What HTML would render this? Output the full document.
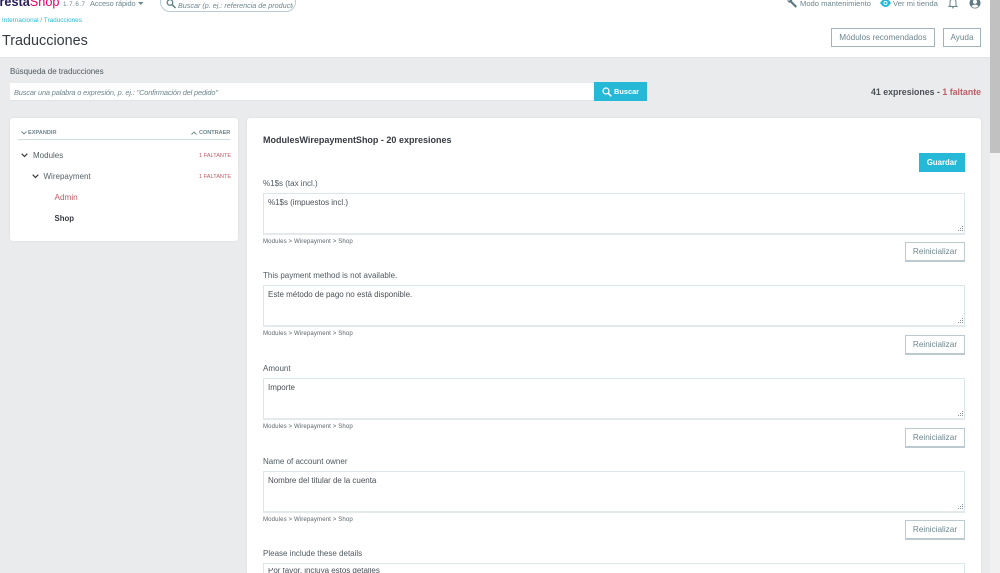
<!DOCTYPE html>
<html lang="es"><head><meta charset="utf-8"><title>Traducciones</title>
<style>
html,body{margin:0;padding:0;width:1000px;height:573px;overflow:hidden;background:#eaebec;font-family:"Liberation Sans",sans-serif;color:#6c868e}
#w{position:relative;width:1000px;height:573px;overflow:hidden;contain:paint}
.a{position:absolute;white-space:nowrap;line-height:1}
.box{position:absolute;box-sizing:border-box}
.ta{position:absolute;left:263px;width:702px;height:42px;box-sizing:border-box;border:1px solid #dbe6e9;border-bottom:2px solid #e4eaec;background:#fff;color:#4a4f56}
.ta span{position:absolute;left:4px;top:4px;font-size:8px;line-height:10px;white-space:nowrap;letter-spacing:-.02px}
.ta svg{position:absolute;right:0;bottom:0}
.lb{position:absolute;left:263px;font-size:8px;line-height:10px;color:#4e5a60;white-space:nowrap}
.pt{position:absolute;left:263px;font-size:6.1px;line-height:8px;color:#5c666b;white-space:nowrap;letter-spacing:.1px}
.rb{position:absolute;left:905px;width:60px;height:20px;box-sizing:border-box;border:1px solid #bccad0;border-bottom:2px solid #bccad0;background:#fff;color:#6c868e;font-size:8.2px;line-height:17px;text-align:center}
</style></head><body><div id="w">

<!-- header -->
<div class="box" style="left:0;top:0;width:990px;height:58px;background:#fff;border-bottom:1px solid #e3e5e6"></div>
<div class="a" style="left:-9px;top:-4px;font-size:12.7px;font-weight:bold;color:#251b5b">Presta<span style="color:#df0067;font-weight:normal">Shop</span></div>
<div class="a" style="left:63px;top:2px;font-size:6.2px;color:#6c868e;letter-spacing:.5px">1.7.6.7</div>
<div class="a" style="left:90px;top:0;font-size:7.4px;color:#6c868e;letter-spacing:-.1px">Acceso rápido</div>
<svg class="box" style="left:138px;top:2px" width="6" height="4"><path d="M0 0h5.500L2.750 3z" fill="#6c868e"/></svg>
<div class="box" style="left:160px;top:-8px;width:136px;height:20px;border:1px solid #bbcdd2;border-radius:10px;background:#fff"></div>
<svg class="box" style="left:166px;top:-1px" width="11" height="10" viewBox="0 0 11 10"><circle cx="4" cy="3.500" r="2.800" fill="none" stroke="#5f7a82" stroke-width="1.200"/><path d="M6 5.500l3.500 3.500" stroke="#5f7a82" stroke-width="1.500"/></svg>
<div class="a" style="left:178px;top:2px;width:115px;overflow:hidden;font-size:7.2px;font-style:italic;color:#6c868e">Buscar (p. ej.: referencia de producto</div>

<svg class="box" style="left:786px;top:-1px" width="12" height="10" viewBox="0 0 12 10"><path d="M1.500 .5a2.600 2.600 0 0 0 3 3.200l5 5 1.600-1.500-5-5A2.800 2.800 0 0 0 2.600-1L4 .8 3 2 1.500 .5z" fill="#5f7a82"/></svg>
<div class="a" style="left:800px;top:0;font-size:7.6px;color:#6c868e">Modo mantenimiento</div>
<svg class="box" style="left:880px;top:-1px" width="11" height="9" viewBox="0 0 11 9"><path d="M0 4C2 1 4 0 5.500 0S9 1 11 4C9 7 7 8 5.500 8S2 7 0 4z" fill="#25b9d7"/><circle cx="5.500" cy="4" r="2" fill="#fff"/><circle cx="5.500" cy="4" r="1.100" fill="#25b9d7"/></svg>
<div class="a" style="left:893px;top:0;font-size:7.7px;color:#6c868e">Ver mi tienda</div>
<svg class="box" style="left:948px;top:-1px" width="10" height="10" viewBox="0 0 10 10"><path d="M2 6.500V3.500C2 1 3.300 0 5 0s3 1 3 3.500v3l1 1H1z" fill="none" stroke="#6c868e" stroke-width="1"/><path d="M4 8.300h2V9.300H4z" fill="#6c868e"/></svg>
<svg class="box" style="left:969px;top:-2px" width="12" height="11" viewBox="0 0 12 11"><circle cx="6" cy="5" r="5.500" fill="#5f7a82"/><circle cx="6" cy="3.800" r="2.100" fill="#fff"/><path d="M2.600 8.300C3.400 6.900 4.600 6.600 6 6.600s2.600.3 3.400 1.700C8.500 9.400 7.300 9.800 6 9.800S3.500 9.400 2.600 8.300z" fill="#fff"/></svg>

<div class="a" style="left:2px;top:17.500px;font-size:6.4px;color:#25b9d7">Internacional / Traducciones</div>
<div class="a" style="left:2px;top:34px;font-size:14.4px;color:#363a41">Traducciones</div>

<div class="box" style="left:831px;top:28px;width:104px;height:19px;border:1px solid #a0b3b9;background:#fff;font-size:8.2px;line-height:17px;text-align:center;color:#6c868e">Módulos recomendados</div>
<div class="box" style="left:943px;top:28px;width:38px;height:19px;border:1px solid #a0b3b9;background:#fff;font-size:8.2px;line-height:17px;text-align:center;color:#6c868e">Ayuda</div>

<!-- search -->
<div class="a" style="left:10px;top:68px;font-size:8px;color:#4e5a60;letter-spacing:-.05px">Búsqueda de traducciones</div>
<div class="box" style="left:10px;top:83px;width:584px;height:18px;background:#fff;border-bottom:1px solid #dfe4e6"></div>
<div class="a" style="left:14px;top:89px;font-size:7.4px;font-style:italic;color:#6c868e;letter-spacing:-.15px">Buscar una palabra o expresión, p. ej.: "Confirmación del pedido"</div>
<div class="box" style="left:594px;top:82px;width:53px;height:19px;background:#25b9d7"></div>
<svg class="box" style="left:602px;top:87px" width="10" height="10" viewBox="0 0 10 10"><circle cx="4" cy="4" r="3" fill="none" stroke="#fff" stroke-width="1.200"/><path d="M6.200 6.200L9.300 9.300" stroke="#fff" stroke-width="1.500"/></svg>
<div class="a" style="left:614px;top:88px;font-size:7.4px;font-weight:bold;color:#fff">Buscar</div>
<div class="a" style="left:871px;top:87.500px;font-size:8.8px;font-weight:bold;color:#4a5157">41 expresiones - <span style="color:#c05c67">1 faltante</span></div>

<!-- left card -->
<div class="box" style="left:10px;top:118px;width:228px;height:123px;background:#fff;border-radius:3px;box-shadow:0 0 2px rgba(0,0,0,.08)"></div>
<div class="box" style="left:18px;top:139px;width:212px;height:1px;background:#cfdde1"></div>
<svg class="box" style="left:21px;top:131px" width="6" height="4"><path d="M.5.5l2.500 2.500 2.500-2.500" fill="none" stroke="#6c868e" stroke-width=".9"/></svg>
<div class="a" style="left:28px;top:131px;font-size:5.6px;font-weight:bold;color:#6c868e">EXPANDIR</div>
<svg class="box" style="left:191px;top:131px" width="6" height="4"><path d="M.5 3.500L3 1l2.500 2.500" fill="none" stroke="#6c868e" stroke-width=".9"/></svg>
<div class="a" style="left:199px;top:131px;font-size:5.6px;font-weight:bold;color:#6c868e;letter-spacing:-.05px">CONTRAER</div>

<svg class="box" style="left:21px;top:153px" width="7" height="5"><path d="M.7.7L3.500 3.500 6.300.7" fill="none" stroke="#363a41" stroke-width="1.200"/></svg>
<div class="a" style="left:33px;top:152px;font-size:8px;color:#555f65">Modules</div>
<div class="a" style="left:199px;top:154px;font-size:5.6px;color:#c05c67">1 FALTANTE</div>
<svg class="box" style="left:32px;top:174px" width="7" height="5"><path d="M.7.7L3.500 3.500 6.300.7" fill="none" stroke="#363a41" stroke-width="1.200"/></svg>
<div class="a" style="left:43.500px;top:173px;font-size:8px;color:#555f65">Wirepayment</div>
<div class="a" style="left:199px;top:175px;font-size:5.6px;color:#c05c67">1 FALTANTE</div>
<div class="a" style="left:54.500px;top:194px;font-size:8.2px;color:#c05c67">Admin</div>
<div class="a" style="left:54.500px;top:214.500px;font-size:7.800px;font-weight:bold;color:#363a41">Shop</div>

<!-- right card -->
<div class="box" style="left:247px;top:118px;width:734px;height:455px;background:#fff;border-radius:3px 3px 0 0;box-shadow:0 0 2px rgba(0,0,0,.08)"></div>
<div class="a" style="left:263px;top:135.500px;font-size:9px;font-weight:bold;color:#363a41">ModulesWirepaymentShop - 20 expresiones</div>
<div class="box" style="left:919px;top:153px;width:46px;height:19px;background:#25b9d7;font-size:7.800px;font-weight:bold;line-height:19px;text-align:center;color:#fff">Guardar</div>

<div class="lb" style="top:179px">%1$s (tax incl.)</div>
<div class="ta" style="top:193px"><span>%1$s (impuestos incl.)</span><svg width="8" height="8"><path d="M6 1h1v1H6zM4 3h1v1H4zM6 3h1v1H6zM2 5h1v1H2zM4 5h1v1H4zM6 5h1v1H6z" fill="#8a8f92"/></svg></div>
<div class="pt" style="top:238px">Modules &gt; Wirepayment &gt; Shop</div>
<div class="rb" style="top:242px">Reinicializar</div>

<div class="lb" style="top:271px">This payment method is not available.</div>
<div class="ta" style="top:285px"><span>Este método de pago no está disponible.</span><svg width="8" height="8"><path d="M6 1h1v1H6zM4 3h1v1H4zM6 3h1v1H6zM2 5h1v1H2zM4 5h1v1H4zM6 5h1v1H6z" fill="#8a8f92"/></svg></div>
<div class="pt" style="top:330px">Modules &gt; Wirepayment &gt; Shop</div>
<div class="rb" style="top:335px">Reinicializar</div>

<div class="lb" style="top:364px">Amount</div>
<div class="ta" style="top:378px"><span>Importe</span><svg width="8" height="8"><path d="M6 1h1v1H6zM4 3h1v1H4zM6 3h1v1H6zM2 5h1v1H2zM4 5h1v1H4zM6 5h1v1H6z" fill="#8a8f92"/></svg></div>
<div class="pt" style="top:423px">Modules &gt; Wirepayment &gt; Shop</div>
<div class="rb" style="top:427.500px">Reinicializar</div>

<div class="lb" style="top:457px">Name of account owner</div>
<div class="ta" style="top:471px"><span>Nombre del titular de la cuenta</span><svg width="8" height="8"><path d="M6 1h1v1H6zM4 3h1v1H4zM6 3h1v1H6zM2 5h1v1H2zM4 5h1v1H4zM6 5h1v1H6z" fill="#8a8f92"/></svg></div>
<div class="pt" style="top:516px">Modules &gt; Wirepayment &gt; Shop</div>
<div class="rb" style="top:520px">Reinicializar</div>

<div class="lb" style="top:549px">Please include these details</div>
<div class="ta" style="top:563px;height:10px;border-bottom:0;overflow:hidden"><span style="top:4px;line-height:6px;height:6px;overflow:hidden">Por favor, incluya estos detalles</span></div>

<!-- scrollbar -->
<div class="box" style="left:990px;top:0;width:10px;height:573px;background:#f1f1f1"></div>
<div class="box" style="left:990px;top:0;width:10px;height:153px;background:#c1c1c1"></div>
</div></body></html>
